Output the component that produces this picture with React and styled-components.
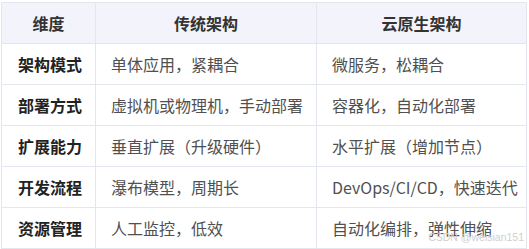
import React from 'react';
import styled, { createGlobalStyle } from 'styled-components';

const rows = [
    ['架构模式', '单体应用，紧耦合', '微服务，松耦合'],
    ['部署方式', '虚拟机或物理机，手动部署', '容器化，自动化部署'],
    ['扩展能力', '垂直扩展（升级硬件）', '水平扩展（增加节点）'],
    ['开发流程', '瀑布模型，周期长', 'DevOps/CI/CD，快速迭代'],
    ['资源管理', '人工监控，低效', '自动化编排，弹性伸缩'],
];

const App = () => {
    return (
        <Page>
            <GlobalStyle />
            <Wrap>
                <Table>
                    <thead>
                        <tr>
                            <Head>维度</Head>
                            <Head>传统架构</Head>
                            <Head>云原生架构</Head>
                        </tr>
                    </thead>
                    <tbody>
                        {rows.map((r) => (
                            <tr key={r[0]}>
                                <Cell $strong>{r[0]}</Cell>
                                <Cell>{r[1]}</Cell>
                                <Cell>{r[2]}</Cell>
                            </tr>
                        ))}
                    </tbody>
                </Table>
                <Watermark>CSDN @weisian151</Watermark>
            </Wrap>
        </Page>
    );
}

const GlobalStyle = createGlobalStyle`
    body{
        margin: 0;
        background: white;
        font-family: "Noto Sans CJK SC", "Noto Sans", sans-serif;
    }
`

const Page = styled.div`
    padding: 2px 2px 0 1px;
`

const Wrap = styled.div`
    position: relative;
    width: 526px;
`

const Table = styled.table`
    width: 526px;
    border-collapse: collapse;
    table-layout: fixed;
    th:first-child{
        width: 93px;
    }
    th:nth-child(2){
        width: 220px;
    }
`

const Head = styled.th`
    height: 40px;
    padding: 0;
    background: #f3f4fb;
    border: 1px solid #e4e6ef;
    font-size: 16px;
    font-weight: 700;
    color: #333;
    text-align: center;
`

const Cell = styled.td`
    height: 40px;
    padding: 0 0 0 ${(p) => (p.$strong ? '16px' : '15px')};
    border: 1px solid #e4e6ef;
    font-size: 16px;
    font-weight: ${(p) => (p.$strong ? 700 : 400)};
    color: ${(p) => (p.$strong ? '#222' : '#505050')};
    white-space: nowrap;
`

const Watermark = styled.div`
    position: absolute;
    right: 3px;
    bottom: 7px;
    line-height: 1;
    font-family: "Liberation Sans", Arial, sans-serif;
    font-size: 10.5px;
    color: #cfcfcf;
`

export default App;
